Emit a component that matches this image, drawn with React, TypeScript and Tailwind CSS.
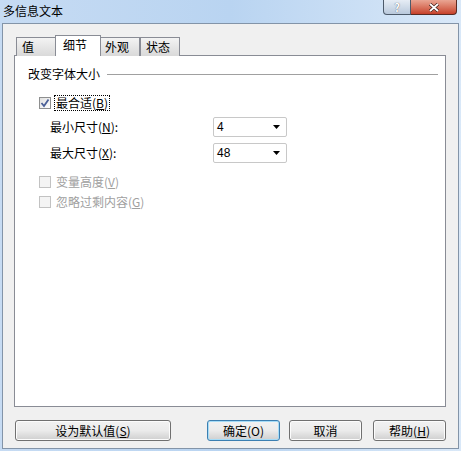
import React from "react";

const font = { fontFamily: '"Noto Sans CJK SC", "Liberation Sans", sans-serif' };

function Tab({ label, active, w }: { label: string; active?: boolean; w: string }) {
  if (active) {
    return (
      <div
        className={`${w} h-[21px] -mx-[2px] z-10 relative border border-b-0 border-[#898c95] bg-white flex items-start pl-[7px] pt-[2px] text-[12px] leading-[14px]`}
      >
        {label}
      </div>
    );
  }
  return (
    <div
      className={`${w} h-[19px] mt-[2px] border border-b-0 border-[#898c95] bg-gradient-to-b from-[#f3f3f3] to-[#d9d9d9] flex items-start pl-[5px] pt-[2px] text-[12px] leading-[14px]`}
    >
      {label}
    </div>
  );
}

function Check({ checked, disabled, children, focus }: { checked?: boolean; disabled?: boolean; children: React.ReactNode; focus?: boolean }) {
  return (
    <div className="flex items-center h-[14px]">
      <div
        className={`w-[12px] h-[12px] border ${disabled ? "border-[#c2c2c2] bg-[#f4f4f4]" : "border-[#8e8f8f] bg-gradient-to-br from-[#e0e0e0] to-[#ffffff]"} flex items-center justify-center`}
      >
        {checked && (
          <svg width="10" height="10" viewBox="0 0 10 10">
            <path d="M1.5 5 L4 8 L8.5 1.5" stroke="#4a5f97" strokeWidth="1.8" fill="none" />
          </svg>
        )}
      </div>
      <span
        className={`ml-[4px] text-[12px] leading-[14px] px-[1px] ${disabled ? "text-[#a0a0a0]" : "text-black"} ${focus ? "outline outline-1 outline-dotted outline-black" : ""}`}
      >
        {children}
      </span>
    </div>
  );
}

function Select({ value }: { value: string }) {
  return (
    <div className="w-[74px] h-[20px] border border-[#c8c8c8] rounded-[2px] bg-white flex items-center pl-[3px] pr-[6px]">
      <span className="flex-1 text-[12px] leading-[14px]" style={{ fontFamily: '"Liberation Sans", sans-serif' }}>
        {value}
      </span>
      <svg width="7" height="4" viewBox="0 0 7 4">
        <path d="M0 0 H7 L3.5 4 Z" fill="#000" />
      </svg>
    </div>
  );
}

function Btn({ children, w, def }: { children: React.ReactNode; w: string; def?: boolean }) {
  return (
    <div
      className={`${w} h-[21px] rounded-[3px] border ${def ? "border-[#3c7fb1] shadow-[inset_0_0_0_1px_#a6dcf7]" : "border-[#707070] shadow-[inset_0_0_0_1px_#fcfcfc]"} bg-gradient-to-b from-[#f2f2f2] via-[#ebebeb] to-[#cfcfcf] flex items-center justify-center text-[12px] leading-[14px]`}
    >
      {children}
    </div>
  );
}

export default function App() {
  return (
    <div className="w-[461px] h-[451px] bg-gradient-to-r from-[#c6dbf3] via-[#b9d4f1] to-[#d9e8f8] flex flex-col text-black" style={font}>
      {/* title bar */}
      <div className="h-[23px] flex items-start">
        <div className="pl-[3px] pt-[4px] text-[12px] leading-[14px]">多信息文本</div>
        <div className="ml-auto mr-[4px] flex">
          <div className="w-[28px] h-[15px] border border-t-0 border-[#4c5a6a] rounded-bl-[4px] bg-gradient-to-b from-[#e6edf5] to-[#b9c9dc] flex items-center justify-center text-white text-[11px] leading-[11px] font-bold [text-shadow:0_0_1px_#334]">
            ?
          </div>
          <div className="w-[46px] h-[15px] border border-t-0 border-l-0 border-[#5a2a22] rounded-br-[4px] bg-gradient-to-b from-[#e9a593] to-[#c6402a] flex items-center justify-center">
            <svg width="12" height="9" viewBox="0 0 12 9">
              <path d="M2 1 L10 8 M10 1 L2 8" stroke="#3b1b16" strokeWidth="3.2" />
              <path d="M2 1 L10 8 M10 1 L2 8" stroke="#ffffff" strokeWidth="1.8" />
            </svg>
          </div>
        </div>
      </div>

      {/* client area */}
      <div className="flex-1 ml-[2px] mr-[2px] mb-[2px] border border-[#8394a8] bg-[#f0f0f0] flex flex-col">
        <div className="ml-[11px] mr-[12px] mt-[12px] flex flex-col">
          {/* tabs */}
          <div className="flex pl-[2px] h-[20px] items-end relative z-10 -mb-[1px]">
            <Tab label="值" w="w-[41px]" />
            <Tab label="细节" active w="w-[46px]" />
            <Tab label="外观" w="w-[41px]" />
            <Tab label="状态" w="w-[40px]" />
          </div>
          {/* panel */}
          <div className="h-[352px] border border-[#898c95] bg-white pl-[13px] pr-[7px] pt-[11px]">
            <div className="flex items-center h-[14px]">
              <span className="text-[12px] leading-[14px]">改变字体大小</span>
              <div className="flex-1 ml-[7px] h-px bg-[#a0a0a0]" />
            </div>
            <div className="ml-[11px] mt-[15px]">
              <Check checked focus>
                最合适(<u>B</u>)
              </Check>
            </div>
            <div className="ml-[22px] mt-[7px] flex items-center h-[20px]">
              <span className="w-[163px] text-[12px] leading-[14px]">
                最小尺寸(<u>N</u>):
              </span>
              <Select value="4" />
            </div>
            <div className="ml-[22px] mt-[6px] flex items-center h-[20px]">
              <span className="w-[163px] text-[12px] leading-[14px]">
                最大尺寸(<u>X</u>):
              </span>
              <Select value="48" />
            </div>
            <div className="ml-[11px] mt-[12px] flex flex-col gap-[6px]">
              <Check disabled>
                变量高度(<u>V</u>)
              </Check>
              <Check disabled>
                忽略过剩内容(<u>G</u>)
              </Check>
            </div>
          </div>
        </div>
        {/* buttons */}
        <div className="ml-[12px] mr-[12px] mt-[13px] flex">
          <Btn w="w-[156px]">
            设为默认值(<u>S</u>)
          </Btn>
          <div className="ml-[36px]">
            <Btn w="w-[73px]" def>
              确定(O)
            </Btn>
          </div>
          <div className="ml-[9px]">
            <Btn w="w-[73px]">取消</Btn>
          </div>
          <div className="ml-[11px]">
            <Btn w="w-[73px]">
              帮助(<u>H</u>)
            </Btn>
          </div>
        </div>
      </div>
    </div>
  );
}
